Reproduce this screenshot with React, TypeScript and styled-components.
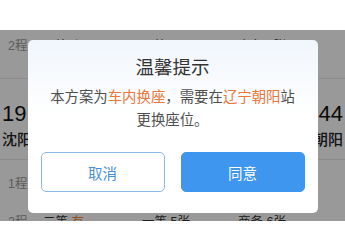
import React from "react";
import styled, { createGlobalStyle } from "styled-components";

const GlobalStyle = createGlobalStyle`
  html, body {
    margin: 0;
    padding: 0;
    background: #fff;
  }
  body {
    font-family: "Liberation Sans", "Noto Sans CJK SC", sans-serif;
    width: 345px;
    height: 251px;
    overflow: hidden;
  }
`;

const Page = styled.div`
  padding-top: 30px;
`;

const Screen = styled.div`
  position: relative;
  height: 191px;
  overflow: hidden;
  background: #fff;
`;

const TripRow = styled.div<{ $height: number }>`
  display: grid;
  grid-template-columns: 35px 99px 96px 1fr;
  align-items: center;
  height: ${(p) => p.$height}px;
  padding-left: 8px;
  font-size: 12.5px;
  color: #333;
`;

const TripLabel = styled.span`
  color: #999;
`;

const Seat = styled.span`
  & b {
    font-weight: normal;
    color: #f08a3c;
  }
`;

const Divider = styled.div<{ $gap?: number }>`
  height: 1px;
  margin-top: ${(p) => p.$gap ?? 0}px;
  background: #eaeaea;
`;

const Train = styled.div`
  display: flex;
  justify-content: space-between;
  height: 80px;
  padding: 22px 2px 0;
  box-sizing: border-box;
`;

const Stop = styled.div<{ $end?: boolean }>`
  display: flex;
  flex-direction: column;
  align-items: ${(p) => (p.$end ? "flex-end" : "flex-start")};
`;

const Time = styled.div`
  font-size: 22px;
  line-height: 26px;
  color: #111;
`;

const Station = styled.div`
  font-size: 15px;
  line-height: 20px;
  margin-top: 3px;
  color: #222;
  font-weight: 500;
`;

const Overlay = styled.div`
  position: absolute;
  inset: 0;
  background: rgba(0, 0, 0, 0.4);
  display: flex;
  justify-content: center;
  align-items: flex-start;
  padding-top: 10px;
`;

const Dialog = styled.div`
  width: 290px;
  height: 173px;
  box-sizing: border-box;
  border-radius: 5px;
  background: linear-gradient(#f1f6fc, #fff 45%);
  padding: 16px 13px 0;
  display: flex;
  flex-direction: column;
  align-items: center;
`;

const Title = styled.div`
  font-size: 18.5px;
  line-height: 24px;
  color: #333;
`;

const Message = styled.div`
  margin-top: 6px;
  font-size: 14.4px;
  line-height: 23px;
  color: #4f4f4f;
  text-align: center;
  padding: 0 8px;

  & em {
    font-style: normal;
    color: #e9773a;
  }
`;

const Actions = styled.div`
  display: grid;
  grid-template-columns: 1fr 1fr;
  gap: 16px;
  width: 100%;
  margin-top: 20px;
`;

const Button = styled.button<{ $primary?: boolean }>`
  height: 40px;
  border-radius: 5px;
  font-family: inherit;
  font-size: 14.5px;
  border: 1px solid ${(p) => (p.$primary ? "#3f96ef" : "#8db8e4")};
  background: ${(p) => (p.$primary ? "#3f96ef" : "#fff")};
  color: ${(p) => (p.$primary ? "#fff" : "#4a8fd6")};
  padding: 0;
`;

export default function App() {
  return (
    <Page>
      <GlobalStyle />
      <Screen>
        <TripRow $height={28}>
          <TripLabel>2程</TripLabel>
          <Seat>
            二等 <b>有</b>
          </Seat>
          <Seat>一等 无</Seat>
          <Seat>商务 4张</Seat>
        </TripRow>
        <Divider $gap={20} />
        <Train>
          <Stop>
            <Time>19:30</Time>
            <Station>沈阳</Station>
          </Stop>
          <Stop $end>
            <Time>21:44</Time>
            <Station>朝阳</Station>
          </Stop>
        </Train>
        <Divider />
        <TripRow $height={45}>
          <TripLabel>1程</TripLabel>
          <Seat>
            二等 <b>有</b>
          </Seat>
          <Seat>一等 3张</Seat>
          <Seat>商务 2张</Seat>
        </TripRow>
        <TripRow $height={30}>
          <TripLabel>2程</TripLabel>
          <Seat>
            二等 <b>有</b>
          </Seat>
          <Seat>一等 5张</Seat>
          <Seat>商务 6张</Seat>
        </TripRow>
        <Overlay>
          <Dialog>
            <Title>温馨提示</Title>
            <Message>
              本方案为<em>车内换座</em>，需要在<em>辽宁朝阳</em>站更换座位。
            </Message>
            <Actions>
              <Button>取消</Button>
              <Button $primary>同意</Button>
            </Actions>
          </Dialog>
        </Overlay>
      </Screen>
    </Page>
  );
}
